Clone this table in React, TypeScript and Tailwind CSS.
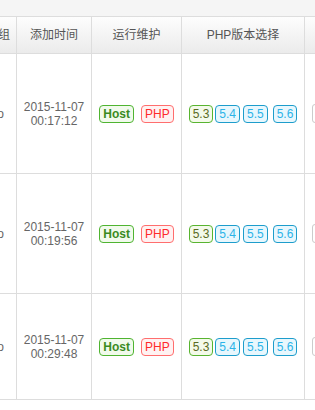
import React from "react";

const font = { fontFamily: '"Liberation Sans", Arial, "Noto Sans CJK SC", sans-serif' };

function Row({ date, time, h }: { date: string; time: string; h: string }) {
  return (
    <div className={`flex border-b border-[#dddddd] ${h}`}>
      <div className="w-[17px] shrink-0 border-r border-[#dddddd] flex items-center justify-end overflow-hidden pr-[12px] text-[12px] text-[#666]">
        <span className="whitespace-nowrap">o</span>
      </div>
      <div className="w-[75px] shrink-0 border-r border-[#dddddd] flex flex-col items-center justify-center text-[12px] leading-[14px] text-[#666]">
        <div>{date}</div>
        <div>{time}</div>
      </div>
      <div className="w-[90px] shrink-0 border-r border-[#dddddd] flex items-center justify-center gap-[7px]">
        <span className="h-[18px] px-[3px] flex items-center rounded-[4px] border border-[#4fb431] bg-[#f1faec] text-[#3b8b1f] text-[12px] font-bold">Host</span>
        <span className="h-[18px] px-[3px] flex items-center rounded-[4px] border border-[#ff6e6e] bg-[#fff2f2] text-[#ff2b2b] text-[12px]">PHP</span>
      </div>
      <div className="w-[123px] shrink-0 border-r border-[#dddddd] flex items-center justify-center">
        <span className="h-[18px] px-[3px] flex items-center rounded-[4px] border border-[#58b430] bg-[#f4faea] text-[#5b6b22] text-[12px]">5.3</span>
        <span className="ml-[2px] h-[18px] px-[3px] flex items-center rounded-[4px] border border-[#1d9dcc] bg-[#e8f7fd] text-[#2cb3e8] text-[12px]">5.4</span>
        <span className="ml-[3px] h-[18px] px-[3px] flex items-center rounded-[4px] border border-[#1d9dcc] bg-[#e8f7fd] text-[#2cb3e8] text-[12px]">5.5</span>
        <span className="ml-[5px] h-[18px] px-[3px] flex items-center rounded-[4px] border border-[#1d9dcc] bg-[#e8f7fd] text-[#2cb3e8] text-[12px]">5.6</span>
      </div>
      <div className="flex-1 flex items-center">
        <span className="ml-[7px] h-[19px] w-[20px] shrink-0 rounded-[3px] border border-[#cccccc] bg-white"></span>
      </div>
    </div>
  );
}

export default function App() {
  return (
    <div className="w-[315px] h-[410px] overflow-hidden bg-white" style={font}>
      <div className="h-[17px] bg-[#f5f5f5] border-b border-[#dddddd]"></div>
      <div className="flex h-[37px] border-b border-[#dddddd] bg-gradient-to-b from-[#fdfdfd] to-[#ebebeb] text-[12px] text-[#555]">
        <div className="w-[17px] shrink-0 border-r border-[#dddddd] flex items-center justify-end overflow-hidden pr-[6px]">
          <span className="whitespace-nowrap">组</span>
        </div>
        <div className="w-[75px] shrink-0 border-r border-[#dddddd] flex items-center justify-center">添加时间</div>
        <div className="w-[90px] shrink-0 border-r border-[#dddddd] flex items-center justify-center">运行维护</div>
        <div className="w-[123px] shrink-0 border-r border-[#dddddd] flex items-center justify-center">PHP版本选择</div>
        <div className="flex-1"></div>
      </div>
      <Row date="2015-11-07" time="00:17:12" h="h-[120px]" />
      <Row date="2015-11-07" time="00:19:56" h="h-[120px]" />
      <Row date="2015-11-07" time="00:29:48" h="h-[106px]" />
    </div>
  );
}
